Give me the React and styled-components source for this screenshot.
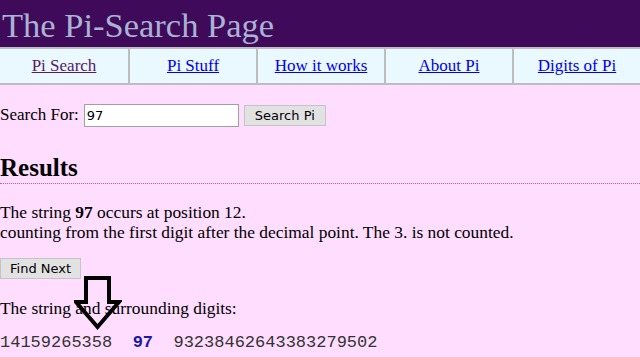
import styled, { createGlobalStyle } from "styled-components";

const GlobalStyle = createGlobalStyle`
  html, body {
    margin: 0;
    padding: 0;
    background: #ffddff;
    font-family: "Liberation Serif", "Times New Roman", serif;
    font-size: 17px;
    color: #000;
  }
`;

const Page = styled.div`
  position: relative;
  width: 640px;
  min-height: 357px;
  overflow: hidden;
`;

const Header = styled.div`
  background: #400a5a;
  height: 47px;
  display: flex;
  align-items: center;
`;

const Title = styled.h1`
  margin: 3px 0 0;
  padding-left: 2px;
  font-weight: normal;
  font-size: 34.5px;
  color: #a9b3d3;
  line-height: 1;
`;

const Nav = styled.div`
  display: grid;
  grid-template-columns: repeat(5, 1fr);
  border-top: 2px solid #bdbdbd;
  border-bottom: 2px solid #bdbdbd;
  background: #eaf8ff;
`;

const NavCell = styled.div`
  height: 34px;
  display: flex;
  align-items: center;
  justify-content: center;
  border-left: ${(p) => (p.$first ? "none" : "2px solid #bdbdbd")};
`;

const NavLink = styled.a`
  color: ${(p) => (p.$visited ? "#551a6b" : "#0000ee")};
  text-decoration: underline;
  cursor: pointer;
`;

const SearchRow = styled.form`
  display: flex;
  align-items: center;
  margin: 18px 0 0;
  height: 24px;
`;

const Label = styled.label`
  margin-right: 5px;
`;

const Input = styled.input`
  box-sizing: border-box;
  width: 155px;
  height: 23px;
  margin: 0 5px 0 0;
  padding: 1px 2px;
  border: 1px solid #a0a0a0;
  background: #fff;
  font-family: "DejaVu Sans", Tahoma, sans-serif;
  font-size: 13px;
`;

const Button = styled.button`
  display: block;
  box-sizing: border-box;
  height: 21px;
  padding: 0 ${(p) => p.$px || 9}px;
  margin: 0;
  border: 1px solid #c4c4c4;
  background: #e2e2e2;
  color: #000;
  font-family: "DejaVu Sans", Tahoma, sans-serif;
  font-size: 13px;
`;

const Results = styled.h2`
  margin: 27px 0 0;
  font-size: 25px;
  font-weight: bold;
  line-height: 28px;
  padding-bottom: 1px;
  border-bottom: 1px dotted #e8507a;
`;

const Para = styled.p`
  margin: ${(p) => p.$mt || 16}px 0 0;
  font-size: 17.4px;
  line-height: 20px;
`;

const ButtonRow = styled.div`
  margin-top: 16px;
`;

const Digits = styled.div`
  margin-top: 15px;
  line-height: 20px;
  font-family: "Liberation Mono", "Courier New", monospace;
  font-size: 17px;
  white-space: pre;
  color: #333;
`;

const Hit = styled.b`
  color: #1a1aa0;
`;

const Arrow = styled.svg`
  position: absolute;
  left: 74px;
  top: 275px;
`;

export default function App() {
  const links = ["Pi Search", "Pi Stuff", "How it works", "About Pi", "Digits of Pi"];
  return (
    <Page>
      <GlobalStyle />
      <Header>
        <Title>The Pi-Search Page</Title>
      </Header>
      <Nav>
        {links.map((l, i) => (
          <NavCell key={l} $first={i === 0}>
            <NavLink $visited={i === 0}>{l}</NavLink>
          </NavCell>
        ))}
      </Nav>
      <SearchRow onSubmit={(e) => e.preventDefault()}>
        <Label>Search For:</Label>
        <Input defaultValue="97" />
        <Button $px={10}>Search Pi</Button>
      </SearchRow>
      <Results>Results</Results>
      <Para $mt={18}>
        The string <b>97</b> occurs at position 12.
        <br />
        counting from the first digit after the decimal point. The 3. is not counted.
      </Para>
      <ButtonRow>
        <Button $px={9}>Find Next</Button>
      </ButtonRow>
      <Para $mt={19}>The string and surrounding digits:</Para>
      <Digits>
        {"14159265358  "}
        <Hit>97</Hit>
        {"  93238462643383279502"}
      </Digits>
      <Arrow width="48" height="56" viewBox="0 0 48 56">
        <path
          d="M12 3 H35 V27 H45 L23.5 52 L2 27 H12 Z"
          fill="none"
          stroke="#000"
          strokeWidth="4"
          strokeLinejoin="miter"
        />
      </Arrow>
    </Page>
  );
}
